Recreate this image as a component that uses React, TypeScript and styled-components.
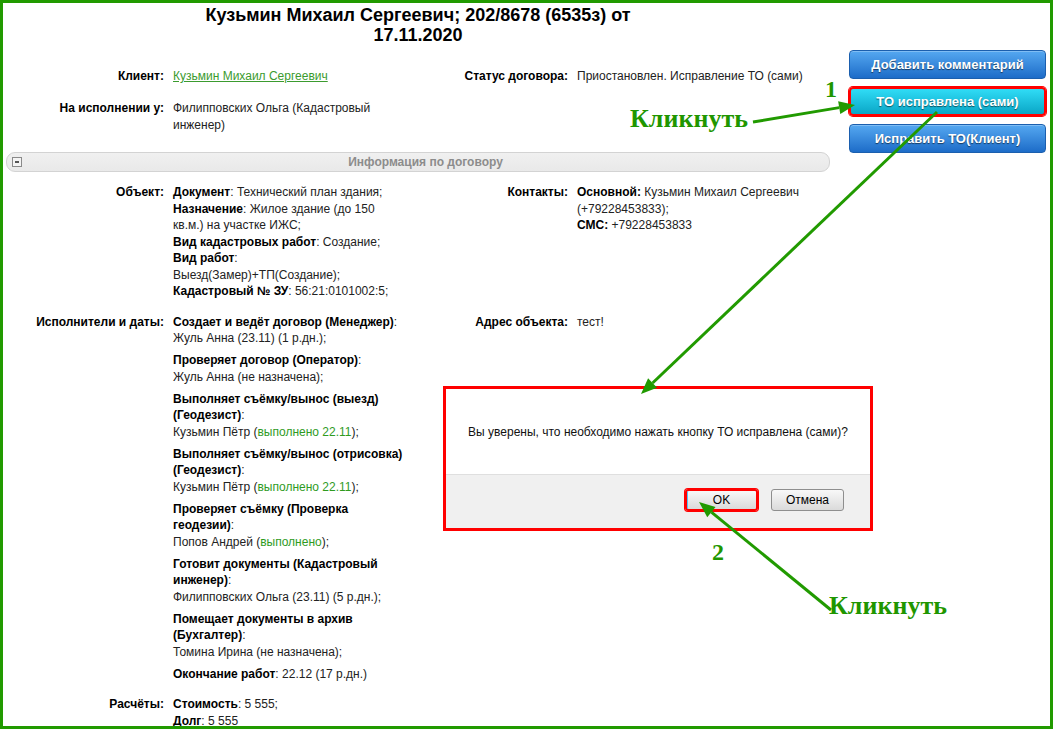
import React from "react";
import styled, { createGlobalStyle } from "styled-components";

const GlobalStyle = createGlobalStyle`
  html, body { margin: 0; padding: 0; background: #fff; }
  body {
    font-family: "Liberation Sans", Arial, sans-serif;
    font-size: 12px;
    color: #222;
  }
  *, *::before, *::after { box-sizing: border-box; }
`;

const GREEN = "#219a00";

const Screen = styled.div`
  position: relative;
  width: 1053px;
  height: 729px;
  overflow: hidden;
  background: #fff;
`;

const Frame = styled.div`
  display: flex;
  gap: 19px;
  width: 100%;
  height: 100%;
  padding: 0 4px 0 3px;
  border: 3px solid ${GREEN};
  overflow: hidden;
`;

const Main = styled.main`
  flex: none;
  width: 824px;
`;

const Title = styled.h1`
  margin: 2px auto 0;
  width: 440px;
  text-align: center;
  font-size: 18px;
  line-height: 20px;
  font-weight: bold;
  color: #000;
`;

const DetailGrid = styled.div<{ $top: number; $rowGap: number }>`
  display: grid;
  grid-template-columns: 167px 233px 171px 1fr;
  row-gap: ${(p) => p.$rowGap}px;
  margin-top: ${(p) => p.$top}px;
  line-height: 16.5px;
`;

const Label = styled.div`
  text-align: right;
  padding-right: 9px;
  font-weight: bold;
  color: #000;
  white-space: nowrap;
`;

const Value = styled.div`
  color: #222;
`;

const Strong = styled.b`
  color: #000;
`;

const ClientLink = styled.a`
  color: #3b9b2f;
  text-decoration: underline;
`;

const Done = styled.span`
  color: #2f9b1f;
`;

const SectionBar = styled.div`
  display: flex;
  align-items: center;
  height: 20px;
  margin-top: 19px;
  padding-left: 5px;
  border: 1px solid #d3d3d3;
  border-radius: 9px;
  background: linear-gradient(#f0f0f0, #e9e9e9);
`;

const CollapseIcon = styled.span`
  position: relative;
  width: 10px;
  height: 10px;
  flex: none;
  border: 1px solid #8a8a8a;
  background: #f4f4f4;
  &::after {
    content: "";
    position: absolute;
    left: 2px;
    top: 3px;
    width: 4px;
    height: 2px;
    background: #555;
  }
`;

const SectionTitle = styled.span`
  flex: 1;
  text-align: center;
  font-weight: bold;
  color: #8c8c8c;
`;

const Entry = styled.div`
  & + & {
    margin-top: 5.5px;
  }
`;

const EntryBody = styled.div``;

const Sidebar = styled.aside`
  flex: none;
  width: 197px;
  padding-top: 47px;
  display: flex;
  flex-direction: column;
  gap: 8px;
`;

const ActionButton = styled.button<{ $active?: boolean }>`
  height: 29px;
  width: 100%;
  border-radius: 4px;
  border: ${(p) => (p.$active ? "2px solid #f00" : "1px solid #1b5fae")};
  box-shadow: ${(p) => (p.$active ? "0 0 0 1px #f00" : "inset 0 1px 0 rgba(255,255,255,0.25)")};
  background: ${(p) =>
    p.$active
      ? "linear-gradient(#30dcf6, #0aa6c6)"
      : "linear-gradient(#55a8f1, #1d6cc8)"};
  color: #fff;
  font-family: "Liberation Sans", Arial, sans-serif;
  font-weight: bold;
  font-size: 13px;
  text-shadow: 0 1px 1px rgba(0, 0, 0, 0.55);
  cursor: pointer;
  padding: 0;
`;

const Dialog = styled.div`
  position: absolute;
  left: 443px;
  top: 386px;
  width: 430px;
  height: 145px;
  border: 3px solid #f00;
  background: #fff;
  display: flex;
  flex-direction: column;
`;

const DialogMessage = styled.div`
  flex: 1;
  display: flex;
  align-items: center;
  justify-content: center;
  color: #111;
`;

const DialogFooter = styled.div`
  height: 54px;
  display: flex;
  justify-content: flex-end;
  align-items: flex-start;
  gap: 13px;
  padding: 14px 26px 0 0;
  background: #f0f0f0;
  border-top: 1px solid #dfdfdf;
`;

const DialogButton = styled.button<{ $active?: boolean }>`
  width: 73px;
  height: 22px;
  padding: 0;
  border-radius: 3px;
  border: ${(p) => (p.$active ? "2px solid #f00" : "1px solid #8e8e8e")};
  box-shadow: ${(p) => (p.$active ? "0 0 0 1px #f00, inset 1px 0 0 #4fc3f7" : "none")};
  background: linear-gradient(#f8f8f8, #dadada);
  font-family: "Liberation Sans", Arial, sans-serif;
  font-size: 12px;
  color: #000;
`;

const Overlay = styled.svg`
  position: absolute;
  left: 0;
  top: 0;
  pointer-events: none;
`;

const Callout = styled.span<{ $left: number; $top: number; $size: number }>`
  position: absolute;
  left: ${(p) => p.$left}px;
  top: ${(p) => p.$top}px;
  font-family: "Liberation Serif", "Times New Roman", serif;
  font-weight: bold;
  font-size: ${(p) => p.$size}px;
  line-height: 1;
  color: #1f9600;
  white-space: nowrap;
  pointer-events: none;
`;

type ArrowSpec = { x1: number; y1: number; x2: number; y2: number };

const arrows: ArrowSpec[] = [
  { x1: 753, y1: 122, x2: 855, y2: 105 },
  { x1: 937, y1: 112, x2: 641, y2: 394 },
  { x1: 831, y1: 610, x2: 699, y2: 502 },
];

function Arrow({ x1, y1, x2, y2 }: ArrowSpec) {
  const dx = x2 - x1;
  const dy = y2 - y1;
  const len = Math.hypot(dx, dy);
  const ux = dx / len;
  const uy = dy / len;
  const head = 16;
  const half = 6.5;
  const bx = x2 - ux * head;
  const by = y2 - uy * head;
  const nx = -uy;
  const ny = ux;
  const pts = `${x2},${y2} ${bx + nx * half},${by + ny * half} ${bx - nx * half},${by - ny * half}`;
  return (
    <g>
      <line x1={x1} y1={y1} x2={bx} y2={by} stroke={GREEN} strokeWidth={3} />
      <polygon points={pts} fill={GREEN} />
    </g>
  );
}

type Executor = { title: string; body: React.ReactNode };

const executors: Executor[] = [
  { title: "Создает и ведёт договор (Менеджер)", body: "Жуль Анна (23.11) (1 р.дн.);" },
  { title: "Проверяет договор (Оператор)", body: "Жуль Анна (не назначена);" },
  {
    title: "Выполняет съёмку/вынос (выезд) (Геодезист)",
    body: (
      <>
        Кузьмин Пётр (<Done>выполнено 22.11</Done>);
      </>
    ),
  },
  {
    title: "Выполняет съёмку/вынос (отрисовка) (Геодезист)",
    body: (
      <>
        Кузьмин Пётр (<Done>выполнено 22.11</Done>);
      </>
    ),
  },
  {
    title: "Проверяет съёмку (Проверка геодезии)",
    body: (
      <>
        Попов Андрей (<Done>выполнено</Done>);
      </>
    ),
  },
  { title: "Готовит документы (Кадастровый инженер)", body: "Филипповских Ольга (23.11) (5 р.дн.);" },
  { title: "Помещает документы в архив (Бухгалтер)", body: "Томина Ирина (не назначена);" },
];

export default function App() {
  return (
    <Screen>
      <GlobalStyle />
      <Frame>
        <Main>
          <Title>Кузьмин Михаил Сергеевич; 202/8678 (6535з) от 17.11.2020</Title>

          <DetailGrid $top={23} $rowGap={15.5}>
            <Label>Клиент:</Label>
            <Value>
              <ClientLink href="#">Кузьмин Михаил Сергеевич</ClientLink>
            </Value>
            <Label>Статус договора:</Label>
            <Value>Приостановлен. Исправление ТО (сами)</Value>

            <Label>На исполнении у:</Label>
            <Value>Филипповских Ольга (Кадастровый инженер)</Value>
            <Label />
            <Value />
          </DetailGrid>

          <SectionBar>
            <CollapseIcon />
            <SectionTitle>Информация по договору</SectionTitle>
          </SectionBar>

          <DetailGrid $top={12} $rowGap={14}>
            <Label>Объект:</Label>
            <Value>
              <Strong>Документ</Strong>: Технический план здания;
              <br />
              <Strong>Назначение</Strong>: Жилое здание (до 150 кв.м.) на участке ИЖС;
              <br />
              <Strong>Вид кадастровых работ</Strong>: Создание;
              <br />
              <Strong>Вид работ</Strong>: Выезд(Замер)+ТП(Создание);
              <br />
              <Strong>Кадастровый № ЗУ</Strong>: 56:21:0101002:5;
            </Value>
            <Label>Контакты:</Label>
            <Value>
              <Strong>Основной:</Strong> Кузьмин Михаил Сергеевич (+79228453833);
              <br />
              <Strong>СМС:</Strong> +79228453833
            </Value>

            <Label>Исполнители и даты:</Label>
            <Value>
              {executors.map((e) => (
                <Entry key={e.title}>
                  <Strong>{e.title}</Strong>:<EntryBody>{e.body}</EntryBody>
                </Entry>
              ))}
              <Entry>
                <Strong>Окончание работ</Strong>: 22.12 (17 р.дн.)
              </Entry>
            </Value>
            <Label>Адрес объекта:</Label>
            <Value>тест!</Value>

            <Label>Расчёты:</Label>
            <Value>
              <Strong>Стоимость</Strong>: 5 555;
              <br />
              <Strong>Долг</Strong>: 5 555
            </Value>
            <Label />
            <Value />
          </DetailGrid>
        </Main>

        <Sidebar>
          <ActionButton>Добавить комментарий</ActionButton>
          <ActionButton $active>ТО исправлена (сами)</ActionButton>
          <ActionButton>Исправить ТО(Клиент)</ActionButton>
        </Sidebar>
      </Frame>

      <Dialog>
        <DialogMessage>Вы уверены, что необходимо нажать кнопку ТО исправлена (сами)?</DialogMessage>
        <DialogFooter>
          <DialogButton $active>OK</DialogButton>
          <DialogButton>Отмена</DialogButton>
        </DialogFooter>
      </Dialog>

      <Overlay width={1053} height={729} viewBox="0 0 1053 729">
        {arrows.map((a, i) => (
          <Arrow key={i} {...a} />
        ))}
      </Overlay>

      <Callout $left={825} $top={77} $size={24}>1</Callout>
      <Callout $left={630} $top={106} $size={26}>Кликнуть</Callout>
      <Callout $left={712} $top={540} $size={24}>2</Callout>
      <Callout $left={829} $top={593} $size={26}>Кликнуть</Callout>
    </Screen>
  );
}
